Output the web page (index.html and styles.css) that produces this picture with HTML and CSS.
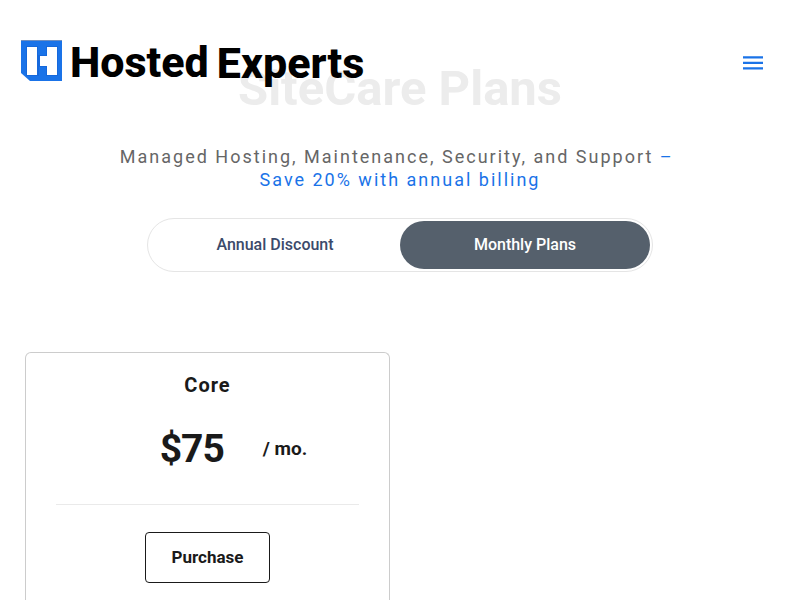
FILE: index.html
```html
<!DOCTYPE html>
<html lang="en">
<head>
<meta charset="utf-8">
<meta name="viewport" content="width=device-width, initial-scale=1">
<title>SiteCare Plans</title>
<link rel="stylesheet" href="styles.css">
</head>
<body>
<header class="site-header">
  <a class="brand" href="#">
    <svg class="brand-mark" viewBox="0 0 41 41" aria-hidden="true">
      <path fill="#1a73e8" d="M0 0H41V41H9L0 33Z"/>
      <path fill="#6f8fc0" d="M0 0H41V1H0Z"/>
      <path fill="#1568dc" d="M5 6H17V15H25V6H37V36H25V27H18V36H5Z"/>
      <path fill="#fff" d="M6 7H16V35H6ZM26 7H36V35H26V26H19V16H26Z"/>
    </svg>
    <span class="brand-first">Hosted</span>
    <span class="brand-last">Experts</span>
  </a>
  <button class="menu-button" type="button" aria-label="Menu">
    <svg class="menu-icon" viewBox="0 0 20 14" aria-hidden="true">
      <path fill="#1a73e8" d="M0 .3H20V2.5H0ZM0 5.8H20V8H0ZM0 11.3H20V13.5H0Z"/>
    </svg>
  </button>
</header>
<main class="page">
  <h1 class="title">SiteCare Plans</h1>
  <p class="lead">Managed Hosting, Maintenance, Security, and Support <span class="accent">–&nbsp;<br>Save 20% with annual billing</span></p>
  <div class="switch">
    <button class="switch-option" type="button" aria-pressed="false">Annual Discount</button>
    <button class="switch-option active" type="button" aria-pressed="true">Monthly Plans</button>
  </div>
  <section class="plans">
    <article class="card">
      <h2 class="plan-name">Core</h2>
      <p class="price"><span class="amount">$75</span><span class="period">/ mo.</span></p>
      <hr class="divider">
      <a class="purchase" href="#">Purchase</a>
    </article>
  </section>
</main>
</body>
</html>
```
FILE: styles.css
```css
* {
  box-sizing: border-box;
}

body {
  margin: 0;
  background: #fff;
  color: #1a1a1a;
  font-family: Roboto, "Liberation Sans", sans-serif;
}

/* Transparent header that lies over the page title */
.site-header {
  position: absolute;
  top: 0;
  left: 0;
  right: 0;
  z-index: 1;
  display: flex;
  align-items: center;
  justify-content: space-between;
  padding: 36px 37px 36px 21px;
}

.brand {
  display: flex;
  align-items: flex-start;
  color: #000;
  font-size: 43px;
  font-weight: 800;
  line-height: 52px;
  text-decoration: none;
}

.brand-mark {
  width: 41px;
  height: 41px;
  margin: 4px 8px 0 0;
}

.brand-last {
  margin-left: 8px;
  padding-top: 1px;
}

.menu-button {
  padding: 0;
  border: 0;
  background: none;
  line-height: 0;
}

.menu-icon {
  width: 20px;
  height: 14px;
}

.page {
  display: flex;
  flex-direction: column;
  height: 100vh;
  padding: 61px 25px 0;
  overflow: hidden;
}

.title {
  margin: 0;
  color: #ececec;
  font-size: 49px;
  font-weight: 700;
  line-height: 56px;
  text-align: center;
}

.lead {
  max-width: 600px;
  margin: 28px auto 0;
  color: #666;
  font-size: 18px;
  letter-spacing: 2px;
  line-height: 23px;
  text-align: center;
}

.accent {
  color: #1a73e8;
}

.switch {
  display: flex;
  width: 100%;
  max-width: 506px;
  margin: 27px auto 0;
  padding: 2px;
  border: 1px solid #e5e5e5;
  border-radius: 27px;
}

.switch-option {
  flex: 1;
  padding: 0;
  border: 0;
  border-radius: 24px;
  background: none;
  color: #3b4a6b;
  font: 500 16px/48px Roboto, "Liberation Sans", sans-serif;
}

.switch-option.active {
  background: #55606c;
  color: #fff;
}

.plans {
  display: grid;
  flex: 1;
  grid-template-columns: 1fr 1fr;
  gap: 20px;
  margin-top: 80px;
}

.card {
  padding: 20px 30px 0;
  border: 1px solid #ccc;
  border-bottom: 0;
  border-radius: 6px 6px 0 0;
  text-align: center;
}

.plan-name {
  margin: 0;
  font-size: 20px;
  font-weight: 700;
  letter-spacing: 1px;
  line-height: 24px;
}

.price {
  display: flex;
  align-items: center;
  justify-content: center;
  gap: 39px;
  margin: 28px 0 0;
  padding-left: 52px;
  font-weight: 700;
}

.amount {
  font-size: 39px;
  letter-spacing: -1px;
  line-height: 48px;
}

.period {
  font-size: 19px;
  line-height: 24px;
}

.divider {
  height: 1px;
  margin: 31px 0 27px;
  border: 0;
  background: #eaeaea;
}

.purchase {
  display: inline-block;
  padding: 12px 26px;
  border: 1px solid #1a1a1a;
  border-radius: 4px;
  color: #1a1a1a;
  font-size: 17px;
  font-weight: 700;
  line-height: 25px;
  text-decoration: none;
}
```
